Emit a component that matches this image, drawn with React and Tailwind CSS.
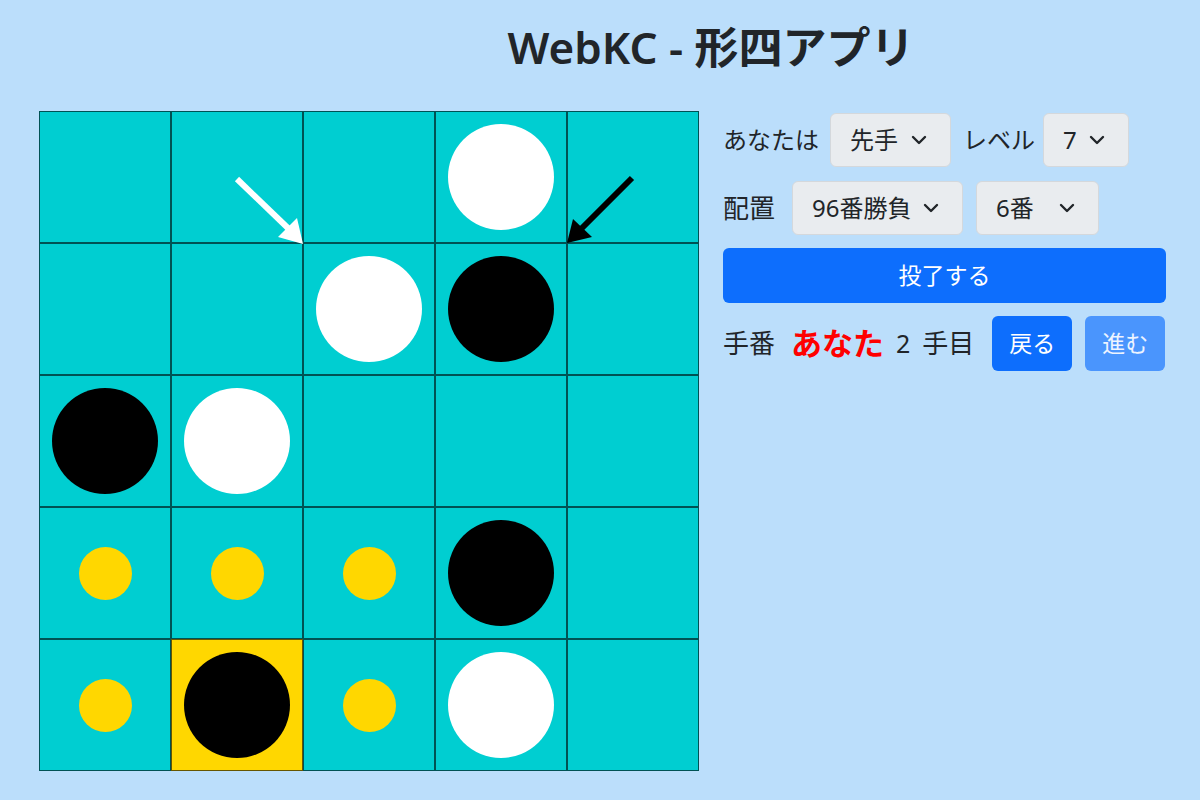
import React from 'react';
import { ChevronDown } from 'lucide-react';

// 0 empty, 1 white, 2 black, 3 hint dot
const board = [
  [0, 0, 0, 1, 0],
  [0, 0, 1, 2, 0],
  [2, 1, 0, 0, 0],
  [3, 3, 3, 2, 0],
  [3, 2, 3, 1, 0],
];
const lastMove = [4, 1];

const Cell = ({ v, hi }) => (
  <div
    className={`w-[132px] h-[132px] border border-black/60 flex items-center justify-center ${
      hi ? 'bg-[#ffd700]' : 'bg-[#00ced1]'
    }`}
  >
    {v === 1 && <div className="w-[106px] h-[106px] rounded-full bg-white"></div>}
    {v === 2 && <div className="w-[106px] h-[106px] rounded-full bg-black"></div>}
    {v === 3 && <div className="w-[53px] h-[53px] rounded-full bg-[#ffd700]"></div>}
  </div>
);

const Select = ({ label, width }) => (
  <div
    className={`${width} h-[54px] flex items-center justify-between pl-[19px] pr-[19px] bg-[#e9ecef] border border-[#d4d8dc] rounded-md text-[24px] text-[#212529]`}
  >
    <span>{label}</span>
    <ChevronDown className="w-[24px] h-[24px]" strokeWidth={2.4} />
  </div>
);

export default function App() {
  return (
    <div
      className="w-[1200px] h-[800px] bg-[#bbdefb] text-[#212529]"
      style={{ fontFamily: '"Noto Sans", "Noto Sans CJK JP", sans-serif' }}
    >
      <h1 className="pl-[222px] pt-[21px] text-center text-[44px] leading-[52px] font-semibold">
        WebKC - 形四アプリ
      </h1>
      <div className="flex gap-[24px] pl-[39px] pt-[38px]">
        {/* Board */}
        <div className="relative">
          {board.map((row, r) => (
            <div key={r} className="flex">
              {row.map((v, c) => (
                <Cell key={c} v={v} hi={r === lastMove[0] && c === lastMove[1]} />
              ))}
            </div>
          ))}
          <svg className="absolute left-0 top-0" width="660" height="660" viewBox="0 0 660 660">
            <line x1="198" y1="68" x2="252" y2="120" stroke="white" strokeWidth="6" />
            <polygon points="264,133 239,126 258,107" fill="white" />
            <line x1="593" y1="67" x2="542" y2="118" stroke="black" strokeWidth="6" />
            <polygon points="528,132 534,108 553,126" fill="black" />
          </svg>
        </div>

        {/* Controls */}
        <div className="w-[443px] flex flex-col gap-[13px] pt-[2px] text-[24px]">
          <div className="flex items-center">
            <span className="mr-[11px]">あなたは</span>
            <Select label="先手" width="w-[121px]" />
            <span className="ml-[12px] mr-[8px]">レベル</span>
            <Select label="7" width="w-[86px]" />
          </div>
          <div className="flex items-center mt-[1px]">
            <span className="text-[26px] mr-[17px]">配置</span>
            <Select label="96番勝負" width="w-[171px]" />
            <div className="w-[13px]"></div>
            <Select label="6番" width="w-[123px]" />
          </div>
          <button className="w-full h-[55px] rounded-md bg-[#0d6efd] text-white text-[23px]">
            投了する
          </button>
          <div className="flex items-center">
            <span className="text-[26px]">手番</span>
            <span className="ml-[16px] text-[31px] font-bold text-[#ff0000]">あなた</span>
            <span className="ml-[12px] text-[25px]">2</span>
            <span className="ml-[12px] text-[26px]">手目</span>
            <button className="ml-[18px] w-[80px] h-[55px] rounded-md bg-[#0d6efd] text-white text-[23px]">
              戻る
            </button>
            <button className="ml-[13px] w-[80px] h-[55px] rounded-md bg-[#4a95fd] text-white/90 text-[23px]">
              進む
            </button>
          </div>
        </div>
      </div>
    </div>
  );
}
